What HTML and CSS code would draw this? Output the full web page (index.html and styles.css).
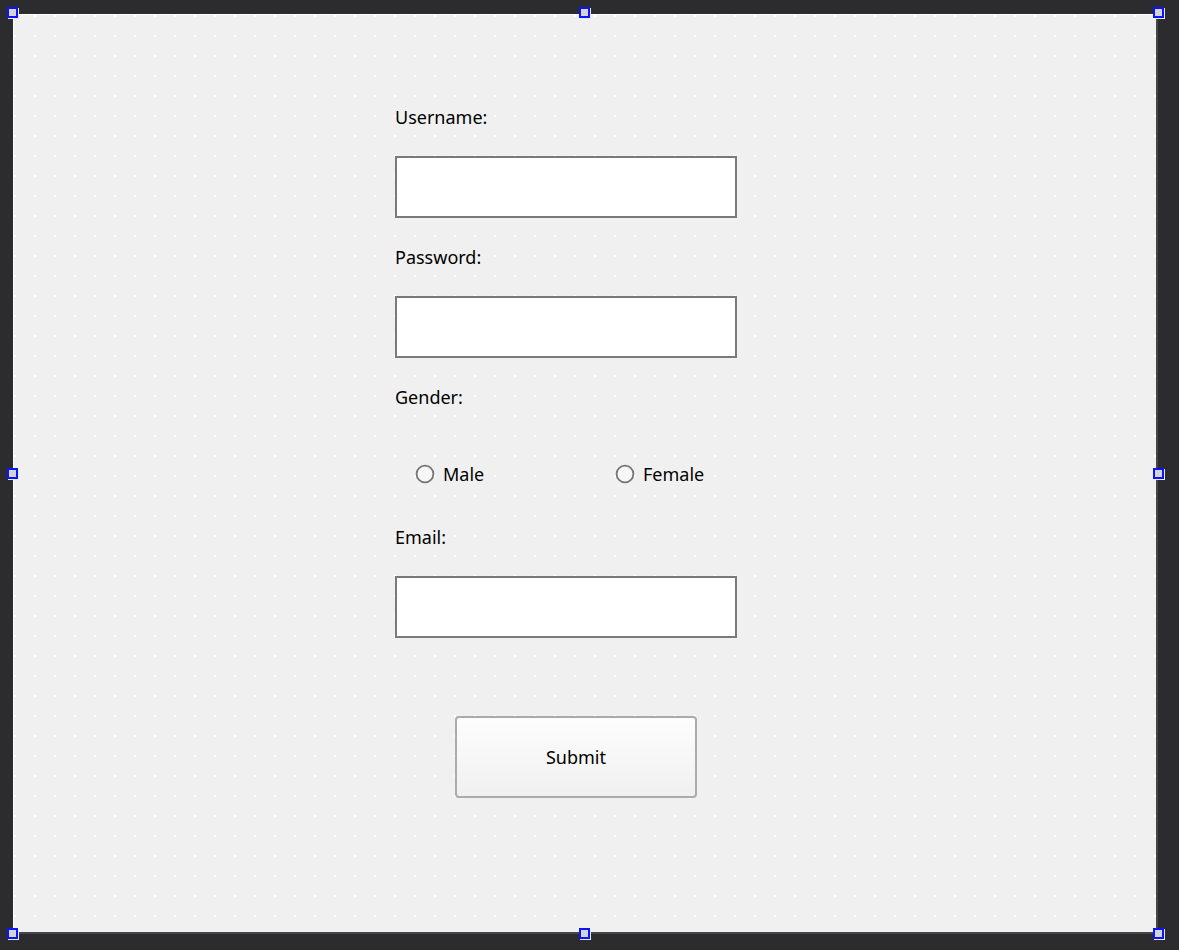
FILE: index.html
```html
<!DOCTYPE html>
<html>
<head>
<meta charset="utf-8">
<link rel="stylesheet" href="styles.css">
</head>
<body>
<div class="stage">
  <div class="frame">
    <div class="form">
      <div class="label l-user">Username:</div>
      <div class="input"></div>
      <div class="label l-pass">Password:</div>
      <div class="input"></div>
      <div class="label l-gender">Gender:</div>
      <div class="radios">
        <div class="radio r-male">
          <svg class="radio-icon" width="20" height="20" viewBox="0 0 20 20"><circle cx="10" cy="10" r="8.4" fill="#f6f6f6" stroke="#767676" stroke-width="1.8"/></svg>
          <span>Male</span>
        </div>
        <div class="radio r-female">
          <svg class="radio-icon" width="20" height="20" viewBox="0 0 20 20"><circle cx="10" cy="10" r="8.4" fill="#f6f6f6" stroke="#767676" stroke-width="1.8"/></svg>
          <span>Female</span>
        </div>
      </div>
      <div class="label l-email">Email:</div>
      <div class="input"></div>
      <div class="btn-row"><div class="button">Submit</div></div>
    </div>
  </div>
  <span class="handle h-tl"></span>
  <span class="handle h-tc"></span>
  <span class="handle h-tr"></span>
  <span class="handle h-ml"></span>
  <span class="handle h-mr"></span>
  <span class="handle h-bl"></span>
  <span class="handle h-bc"></span>
  <span class="handle h-br"></span>
</div>
</body>
</html>
```

FILE: styles.css
```css
html, body {
  margin: 0;
  padding: 0;
  background: #2c2c2e;
}
body {
  width: 1179px;
  height: 950px;
  overflow: hidden;
  font-family: "Noto Sans", "Open Sans", sans-serif;
  color: #000;
}
.stage {
  position: relative;
  width: 1179px;
  height: 950px;
  padding: 14px 0 0 13px;
  box-sizing: border-box;
}
.frame {
  width: 1145px;
  height: 920px;
  box-sizing: border-box;
  border-top: 1px solid #ffffff;
  border-left: 1px solid #ffffff;
  border-right: 2px solid #464646;
  border-bottom: 2px solid #464646;
  background-color: #ffffff;
  background-image:
    linear-gradient(90deg, #f0f0f0 18px, transparent 18px),
    linear-gradient(180deg, #f0f0f0 18px, transparent 18px);
  background-size: 20px 20px;
  background-position: -18px -18px;
}
.form {
  display: flex;
  flex-direction: column;
  align-items: flex-start;
  padding: 91px 0 0 381px;
}
.label {
  font-size: 18px;
  line-height: 22px;
  height: 22px;
  margin-bottom: 28px;
}
.input {
  width: 342px;
  height: 62px;
  box-sizing: border-box;
  border: 2px solid #7a7a7a;
  background: #fff;
  margin-bottom: 28px;
}
.radios {
  display: flex;
  align-items: center;
  height: 62px;
  margin-top: 7px;
  margin-bottom: 21px;
  padding-left: 20px;
}
.radio {
  display: flex;
  align-items: center;
  font-size: 18px;
  line-height: 22px;
}
.radio-icon {
  margin-right: 8px;
}
.r-male {
  width: 200px;
}
.btn-row {
  margin-top: 50px;
  padding-left: 60px;
}
.button {
  width: 242px;
  height: 82px;
  box-sizing: border-box;
  border: 2px solid #ababab;
  border-radius: 4px;
  background: linear-gradient(180deg, #fdfdfd 0%, #f0f0f0 100%);
  display: flex;
  align-items: center;
  justify-content: center;
  font-size: 18px;
}
.handle {
  position: absolute;
  width: 7px;
  height: 7px;
  background: #d4d4d4;
  border: 2px solid #0a14ff;
  box-shadow: 1px 1px 0 #e8e8e8;
}
.h-tl { left: 7px; top: 7px; }
.h-tc { left: 579px; top: 7px; }
.h-tr { left: 1153px; top: 7px; }
.h-ml { left: 7px; top: 468px; }
.h-mr { left: 1153px; top: 468px; }
.h-bl { left: 7px; top: 928px; }
.h-bc { left: 579px; top: 928px; }
.h-br { left: 1153px; top: 928px; }
```
